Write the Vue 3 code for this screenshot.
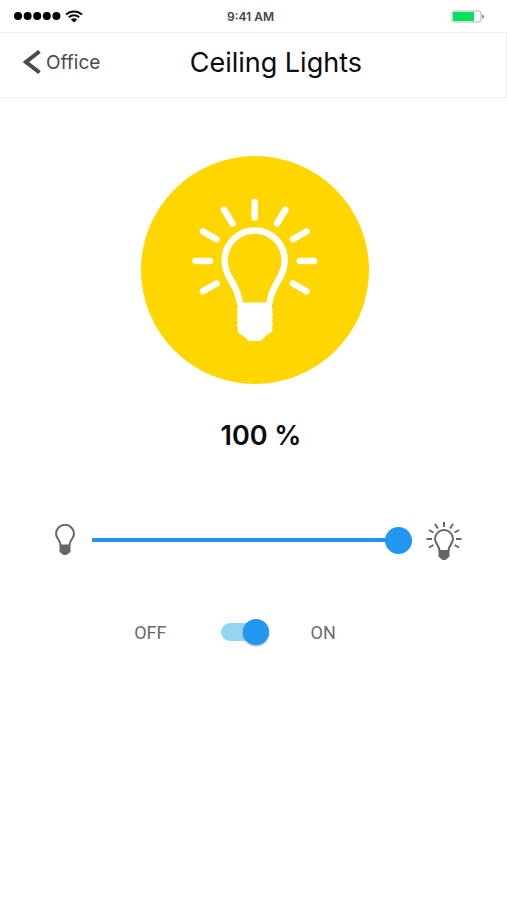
<template>
  <div class="light-page">
    <!-- Status Bar -->
    <div class="status-bar">
      <div class="signal">
        <svg class="dots" viewBox="0 0 47 8" aria-hidden="true">
          <circle v-for="n in 5" :key="n" :cx="n * 9.6 - 5.6" cy="4" r="4" />
        </svg>
        <svg class="wifi" viewBox="0 0 18 13" aria-hidden="true">
          <path d="M1 4.6C5.6 0.3 12.4 0.3 17 4.6M3.8 7.3C6.8 4.5 11.2 4.5 14.2 7.3" />
          <path class="wifi-dot" d="M5.8 9.5C7.7 7.9 10.3 7.9 12.2 9.5L9 12.6Z" />
        </svg>
      </div>
      <span class="time">9:41 AM</span>
      <svg class="battery" viewBox="0 0 34 13" aria-hidden="true">
        <rect class="battery-case" x="1" y="1" width="29" height="11" rx="2" />
        <rect class="battery-level" x="2" y="2" width="21" height="9" />
        <path class="battery-tip" d="M31 4L33.5 6.5L31 9Z" />
      </svg>
    </div>

    <!-- Header -->
    <header class="nav-bar">
      <a class="back-link" href="#">
        <svg class="chevron" viewBox="0 0 18 24" aria-hidden="true">
          <path d="M16.5 1.5L3 12L16.5 22.5" />
        </svg>
        <span>Office</span>
      </a>
      <h1 class="title">Ceiling Lights</h1>
    </header>

    <main class="content">
      <!-- Lamp -->
      <svg class="lamp" :class="{ off: !isOn }" viewBox="0 0 228 228" aria-hidden="true">
        <circle class="lamp-disc" cx="114" cy="114" r="114" />
        <path
          class="lamp-rays"
          d="M113.7 46V61.5M83 53.8L91.5 67.5M144.4 53.8L136 67.5M62 75.5L75.5 83.3M165.5 75.5L152 83.3M54.5 105H69M158.8 105H173M75.5 127.5L62 135.3M152 127.5L165.5 135.3"
        />
        <path
          class="lamp-glass"
          d="M98.7 147C97.5 129 83.7 122 83.7 104.5A30 30 0 0 1 143.7 104.5C143.7 122 129.9 129 128.5 147"
        />
        <path
          class="lamp-base"
          d="M96 146.5H131.5L130.5 151L132 153L131 156L132 158L131 161L132 163L131 166L132 168L131 171L131.5 175C128 179 125 178.5 123 182L119.5 185H108L104.5 182C102 178.5 99 179.5 96.5 175L97 171L95.7 169L96.7 166L95.7 163L96.7 161L95.7 158L96.7 156L95.7 153L97 151Z"
        />
      </svg>

      <output class="level" for="brightness">{{ brightness }} %</output>

      <!-- Brightness -->
      <div class="slider-row">
        <svg class="bulb-dim" viewBox="0 0 20 32" aria-hidden="true">
          <path class="bulb-glass" d="M5.5 21C5.5 16 1 14.5 1 9.8A9 9 0 0 1 19 9.8C19 14.5 14.5 16 14.5 21" />
          <path class="bulb-base" d="M4.5 20.5H15.5V28L11.5 31H8.5L4.5 28Z" />
        </svg>
        <input
          id="brightness"
          v-model="brightness"
          class="slider"
          type="range"
          min="0"
          max="100"
          aria-label="Brightness"
          :style="{ '--fill': `${brightness}%` }"
        />
        <svg class="bulb-bright" viewBox="0 0 36 40" aria-hidden="true">
          <path class="bulb-glass" d="M13.5 31C13.5 25.5 9 23.5 9 19A9 9 0 0 1 27 19C27 23.5 22.5 25.5 22.5 31" />
          <path class="bulb-base" d="M12.5 30H23.5V36.5L19.5 40H16.5L12.5 36.5Z" />
          <path
            class="bulb-rays"
            d="M18 2V7M9 4L12 8.5M27 4L24 8.5M3 10L7.5 12.5M33 10L28.5 12.5M0.5 19H6M30 19H35.5M7.5 25L3 27.5M28.5 25L33 27.5"
          />
        </svg>
      </div>

      <!-- Power -->
      <div class="power-row">
        <span>OFF</span>
        <input v-model="isOn" class="switch" type="checkbox" role="switch" aria-label="Power" />
        <span>ON</span>
      </div>
    </main>
  </div>
</template>

<script setup>
import { ref } from 'vue'

const brightness = ref(100)
const isOn = ref(true)
</script>

<style>
body {
  background: #ffffff;
}
</style>

<style scoped>
.light-page {
  min-height: 100vh;
  box-sizing: border-box;
  background: #ffffff;
  color: #0b0b0b;
  font-family: Inter, "Liberation Sans", sans-serif;
}

/* STATUS BAR */
.status-bar {
  display: grid;
  grid-template-columns: 1fr auto 1fr;
  align-items: center;
  height: 32px;
  padding: 0 22px 0 14px;
}

.signal {
  display: flex;
  align-items: center;
  gap: 4px;
}

.dots {
  width: 47px;
  height: 8px;
}

.wifi {
  width: 18px;
  height: 13px;
  fill: none;
  stroke: #0b0b0b;
  stroke-width: 2;
}

.wifi-dot {
  fill: #0b0b0b;
  stroke: none;
}

.time {
  padding-left: 2px;
  font-size: 12px;
  font-weight: 600;
  color: #444444;
}

.battery {
  width: 34px;
  height: 13px;
  justify-self: end;
}

.battery-case {
  fill: #ffffff;
  stroke: #b5b5b5;
}

.battery-level {
  fill: #05e15b;
}

.battery-tip {
  fill: #8c8c8c;
}

/* HEADER */
.nav-bar {
  display: flex;
  align-items: center;
  height: 58px;
  padding: 0 20px 6px 23px;
  border: 1px solid #eeeeee;
  border-left: none;
}

.back-link {
  display: flex;
  align-items: center;
  gap: 5px;
  width: 36%;
  color: #4a4a4a;
  font-size: 19px;
  text-decoration: none;
}

.chevron {
  width: 18px;
  height: 24px;
  fill: none;
  stroke: #4a4a4a;
  stroke-width: 4;
}

.title {
  margin: 0;
  font-size: 27px;
  font-weight: 400;
  color: #0b0b0b;
  white-space: nowrap;
}

/* CONTENT */
.content {
  display: flex;
  flex-direction: column;
  align-items: center;
  padding: 58px 45px 32px 48px;
}

.lamp {
  width: 228px;
  height: 228px;
}

.lamp-disc {
  fill: #ffd600;
}

.lamp.off .lamp-disc {
  fill: #c4c4c4;
}

.lamp-rays,
.lamp-glass {
  fill: none;
  stroke: #ffffff;
  stroke-width: 6.5;
}

.lamp-rays {
  stroke-linecap: round;
}

.lamp-base {
  fill: #ffffff;
}

.level {
  margin-top: 34px;
  padding-left: 12px;
  font-size: 27px;
  line-height: 36px;
  font-weight: 600;
}

/* SLIDER */
.slider-row {
  display: flex;
  align-items: center;
  align-self: stretch;
  margin-top: 66px;
  padding-left: 7px;
}

.bulb-dim {
  width: 20px;
  height: 32px;
}

.bulb-bright {
  width: 36px;
  height: 40px;
}

.bulb-glass,
.bulb-rays {
  fill: none;
  stroke: #666666;
  stroke-width: 2;
}

.bulb-base {
  fill: #666666;
}

.slider {
  flex: 1;
  min-width: 0;
  height: 28px;
  margin: 0 14px 0 17px;
  appearance: none;
  background: linear-gradient(#2793e6, #2793e6) left center / var(--fill) 4px no-repeat,
    linear-gradient(#cfd8dc, #cfd8dc) center / 100% 4px no-repeat;
  cursor: pointer;
}

.slider::-webkit-slider-thumb {
  appearance: none;
  width: 27px;
  height: 27px;
  border-radius: 50%;
  background: #2196f3;
}

/* SWITCH */
.power-row {
  display: flex;
  align-items: center;
  margin-top: 58px;
  padding-right: 40px;
  font-family: Roboto, "Liberation Sans", sans-serif;
  font-size: 18px;
  color: #6b6b6b;
}

.switch {
  position: relative;
  width: 48px;
  height: 28px;
  margin: 0 42px 0 54px;
  appearance: none;
  cursor: pointer;
}

.switch::before {
  content: '';
  position: absolute;
  top: 5px;
  left: 0;
  right: 4px;
  height: 18px;
  border-radius: 9px;
  background: #94d6f0;
}

.switch::after {
  content: '';
  position: absolute;
  top: 1px;
  right: 0;
  width: 26px;
  height: 26px;
  border-radius: 50%;
  background: #2196f3;
  box-shadow: 0 1px 2px rgba(0, 0, 0, 0.4);
}

.switch:not(:checked)::before {
  background: #c8c8c8;
}

.switch:not(:checked)::after {
  right: 22px;
  background: #f1f1f1;
}
</style>
